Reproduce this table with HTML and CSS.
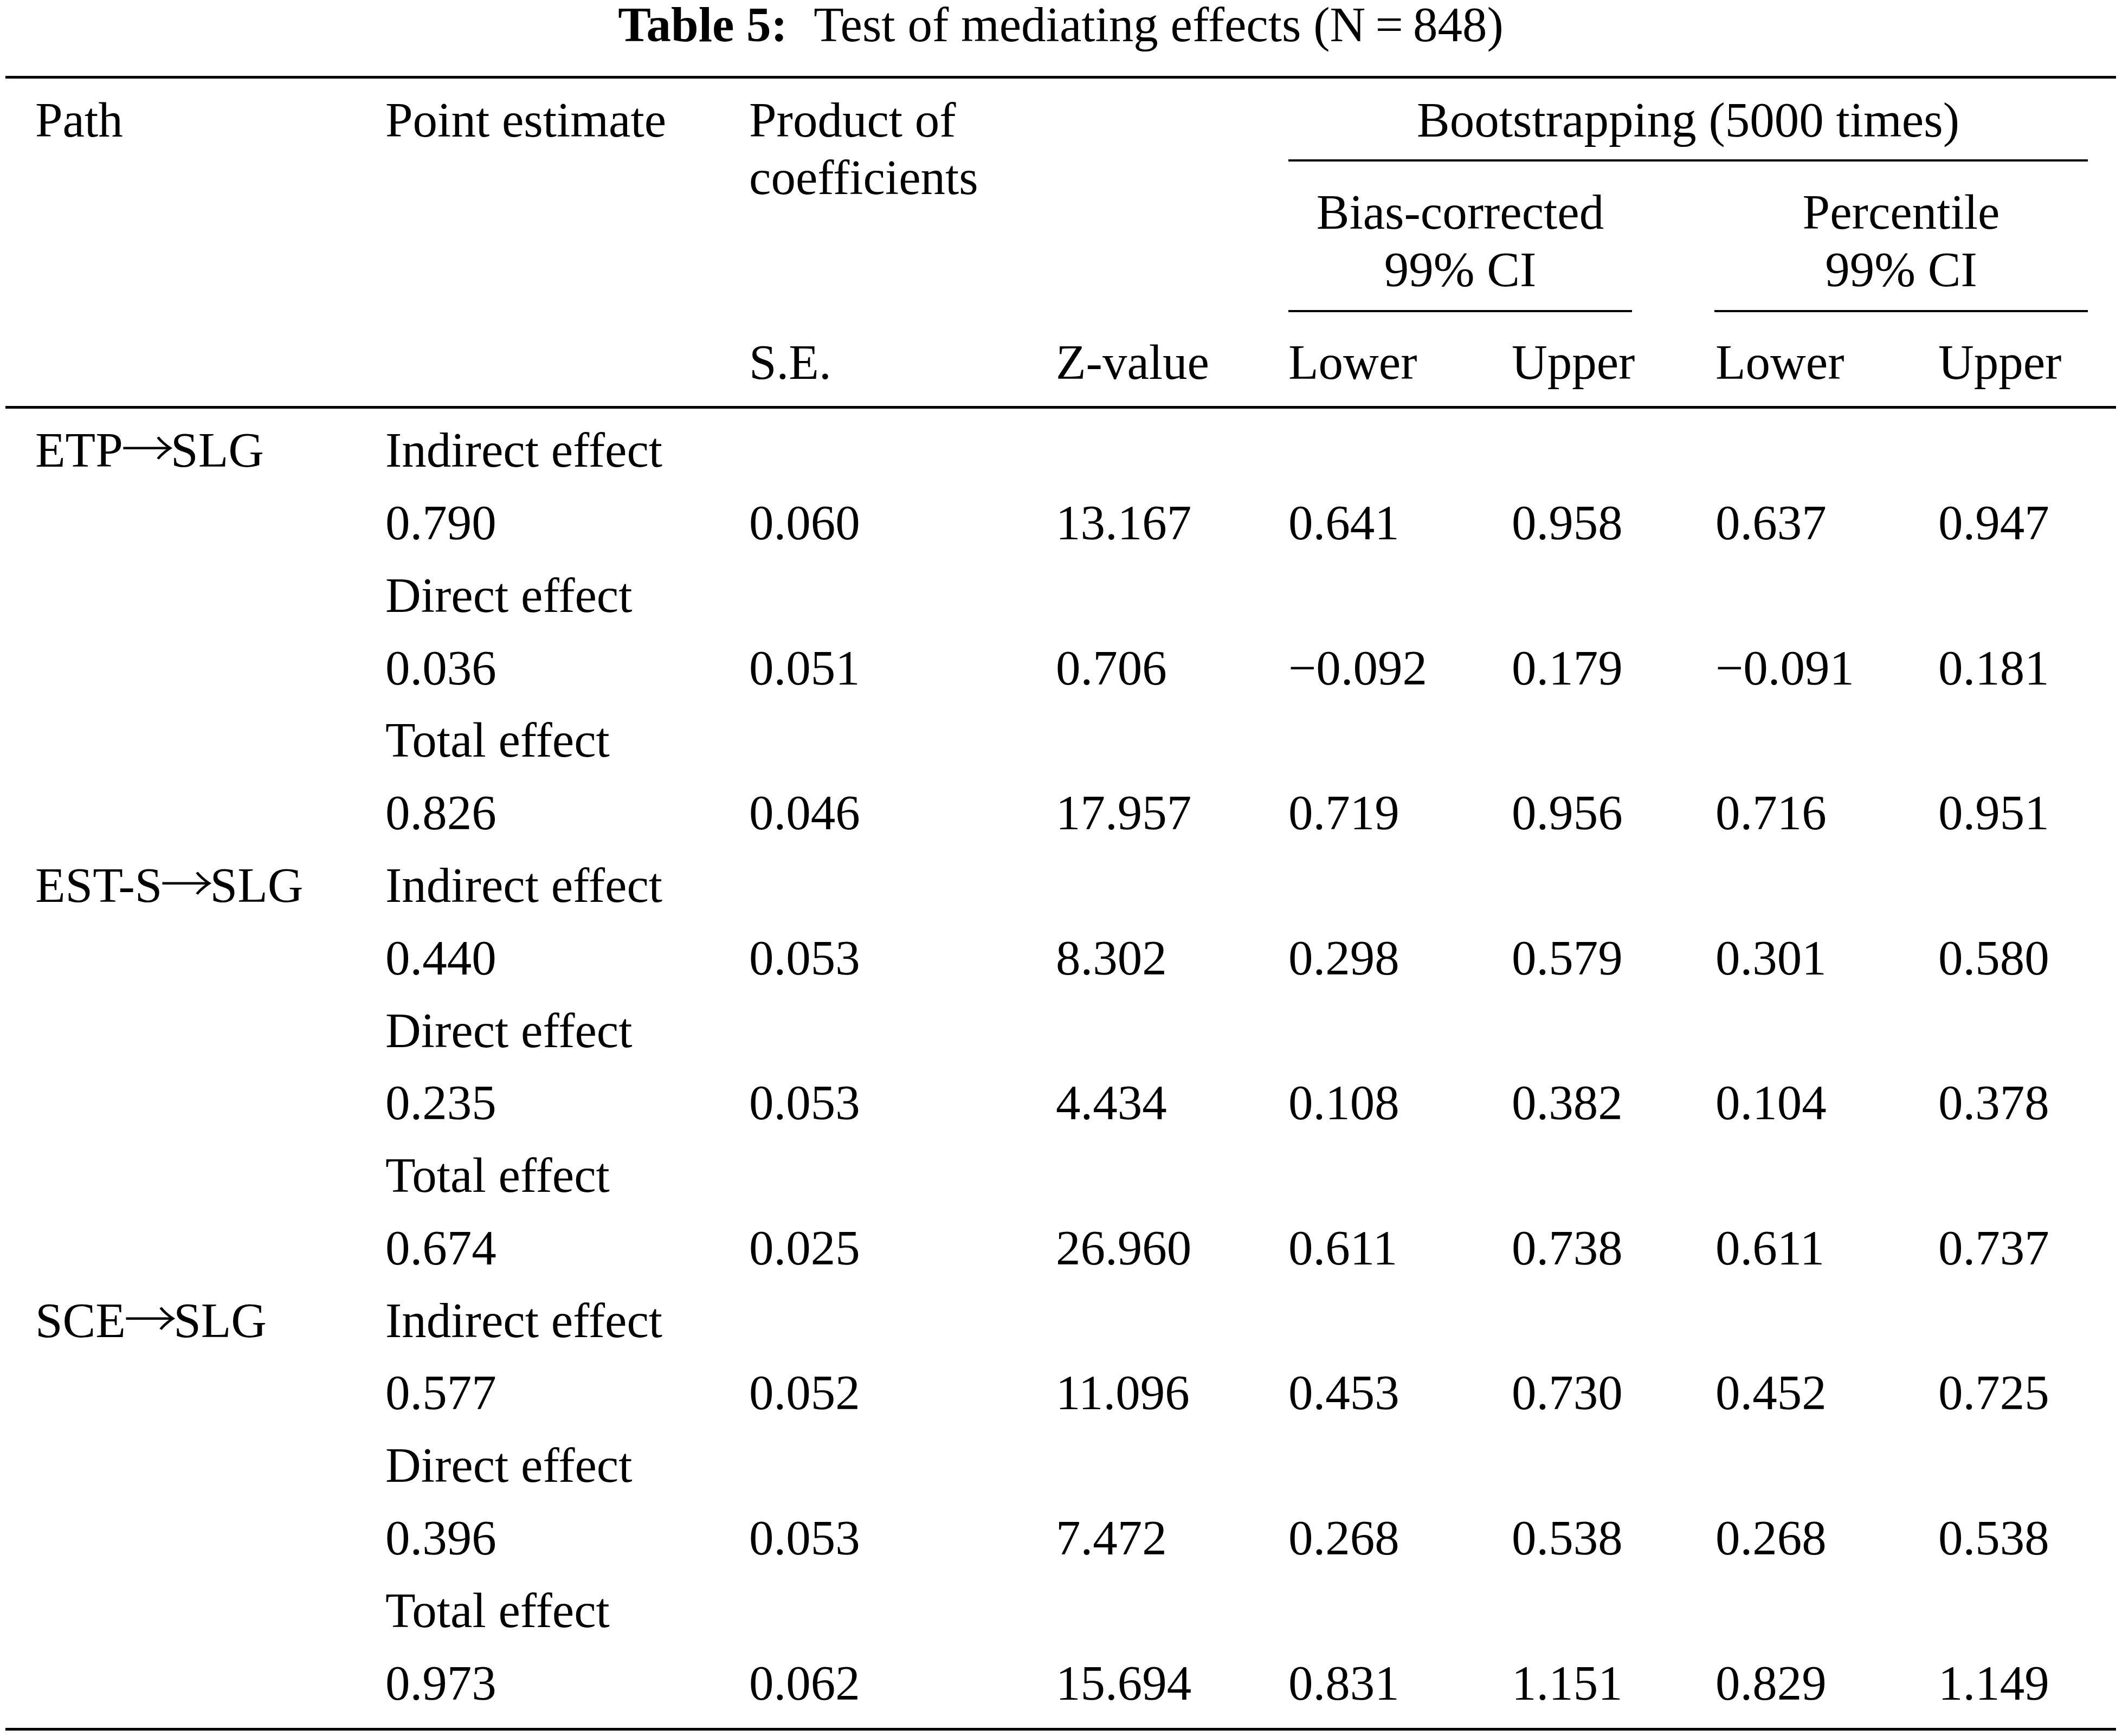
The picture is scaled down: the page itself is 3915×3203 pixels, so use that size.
FILE: index.html
```html
<!DOCTYPE html>
<html lang="en">
<head>
<meta charset="utf-8">
<title>Table 5: Test of mediating effects</title>
<link rel="stylesheet" href="styles.css">
</head>
<body>
<div class="page">
  <div class="caption"><span class="label">Table 5:</span> Test of mediating effects (N&#8201;=&#8201;848)</div>
  <table class="stats">
    <colgroup>
      <col class="c1"><col class="c2"><col class="c3"><col class="c4">
      <col class="c5"><col class="c6"><col class="c7"><col class="c8">
    </colgroup>
    <thead>
      <tr class="ha">
        <th rowspan="3" class="first rule">Path</th>
        <th rowspan="3" class="rule">Point estimate</th>
        <th rowspan="2">Product of<br>coefficients</th>
        <th rowspan="2"></th>
        <th colspan="4" class="group"><div class="span-line boot">Bootstrapping (5000 times)</div></th>
      </tr>
      <tr class="hb">
        <th colspan="2" class="group"><div class="span-line bias">Bias-corrected<br>99% CI</div></th>
        <th colspan="2" class="group"><div class="span-line pct">Percentile<br>99% CI</div></th>
      </tr>
      <tr class="hc">
        <th class="rule">S.E.</th>
        <th class="rule">Z-value</th>
        <th class="rule">Lower</th>
        <th class="rule">Upper</th>
        <th class="rule">Lower</th>
        <th class="rule">Upper</th>
      </tr>
    </thead>
    <tbody>
      <tr><td class="first">ETP<span class="arrow">→</span>SLG</td><td>Indirect effect</td><td></td><td></td><td></td><td></td><td></td><td></td></tr>
      <tr><td class="first"></td><td>0.790</td><td>0.060</td><td>13.167</td><td>0.641</td><td>0.958</td><td>0.637</td><td>0.947</td></tr>
      <tr><td class="first"></td><td>Direct effect</td><td></td><td></td><td></td><td></td><td></td><td></td></tr>
      <tr><td class="first"></td><td>0.036</td><td>0.051</td><td>0.706</td><td>−0.092</td><td>0.179</td><td>−0.091</td><td>0.181</td></tr>
      <tr><td class="first"></td><td>Total effect</td><td></td><td></td><td></td><td></td><td></td><td></td></tr>
      <tr><td class="first"></td><td>0.826</td><td>0.046</td><td>17.957</td><td>0.719</td><td>0.956</td><td>0.716</td><td>0.951</td></tr>
      <tr><td class="first">EST-S<span class="arrow">→</span>SLG</td><td>Indirect effect</td><td></td><td></td><td></td><td></td><td></td><td></td></tr>
      <tr><td class="first"></td><td>0.440</td><td>0.053</td><td>8.302</td><td>0.298</td><td>0.579</td><td>0.301</td><td>0.580</td></tr>
      <tr><td class="first"></td><td>Direct effect</td><td></td><td></td><td></td><td></td><td></td><td></td></tr>
      <tr><td class="first"></td><td>0.235</td><td>0.053</td><td>4.434</td><td>0.108</td><td>0.382</td><td>0.104</td><td>0.378</td></tr>
      <tr><td class="first"></td><td>Total effect</td><td></td><td></td><td></td><td></td><td></td><td></td></tr>
      <tr><td class="first"></td><td>0.674</td><td>0.025</td><td>26.960</td><td>0.611</td><td>0.738</td><td>0.611</td><td>0.737</td></tr>
      <tr><td class="first">SCE<span class="arrow">→</span>SLG</td><td>Indirect effect</td><td></td><td></td><td></td><td></td><td></td><td></td></tr>
      <tr><td class="first"></td><td>0.577</td><td>0.052</td><td>11.096</td><td>0.453</td><td>0.730</td><td>0.452</td><td>0.725</td></tr>
      <tr><td class="first"></td><td>Direct effect</td><td></td><td></td><td></td><td></td><td></td><td></td></tr>
      <tr><td class="first"></td><td>0.396</td><td>0.053</td><td>7.472</td><td>0.268</td><td>0.538</td><td>0.268</td><td>0.538</td></tr>
      <tr><td class="first"></td><td>Total effect</td><td></td><td></td><td></td><td></td><td></td><td></td></tr>
      <tr><td class="first"></td><td>0.973</td><td>0.062</td><td>15.694</td><td>0.831</td><td>1.151</td><td>0.829</td><td>1.149</td></tr>
    </tbody>
  </table>
</div>
</body>
</html>
```
FILE: styles.css
```css
html, body {
  margin: 0;
  padding: 0;
  background: #ffffff;
}

body {
  font-family: "Liberation Serif", "Times New Roman", serif;
  font-size: 91px;
  color: #000000;
}

.page {
  width: 3894px;
  margin-left: 10px;
}

.caption {
  text-align: center;
  line-height: 88px;
  height: 88px;
  padding-top: 2px;
  white-space: nowrap;
}

.caption .label {
  font-weight: bold;
  margin-right: 0.3em;
}

.stats {
  margin-top: 50px;
  width: 3894px;
  table-layout: fixed;
  border-collapse: separate;
  border-spacing: 0;
  border-top: 5px solid #000;
  border-bottom: 5px solid #000;
}

.c1 { width: 701px; }
.c2 { width: 671px; }
.c3 { width: 566px; }
.c4 { width: 429px; }
.c5 { width: 412px; }
.c6 { width: 376px; }
.c7 { width: 411px; }
.c8 { width: 328px; }

.stats th,
.stats td {
  font-weight: normal;
  text-align: left;
  vertical-align: top;
  line-height: 106px;
  padding: 0;
  white-space: nowrap;
}

.stats .first {
  padding-left: 55px;
}

.arrow {
  font-family: "Noto Sans CJK JP", "DejaVu Serif", sans-serif;
  line-height: 0;
  font-weight: 300;
  display: inline-block;
  width: 0.97em;
  text-align: center;
  transform: scaleX(1.08);
}

/* header rows */
.ha th {
  padding-top: 24.3px;
}

.hb th {
  padding-top: 41.3px;
}

.hc th {
  padding-top: 40.3px;
  padding-bottom: 26.7px;
}

.stats th.rule {
  border-bottom: 5px solid #000;
}

.ha th.first.rule,
.ha th.rule {
  padding-bottom: 0;
}

.span-line {
  text-align: center;
  border-bottom: 4px solid #000;
}

.span-line.boot {
  margin-right: 52px;
  padding-bottom: 18.7px;
}

.span-line.bias {
  margin-right: 154px;
  padding-bottom: 20.7px;
}

.span-line.pct {
  margin-left: -2px;
  margin-right: 52px;
  padding-bottom: 20.7px;
}

/* body rows */
.stats tbody td {
  padding-top: 13.9px;
  padding-bottom: 13.9px;
}

.stats tbody tr:first-child td {
  padding-top: 24.3px;
}

.stats tbody tr:last-child td {
  padding-bottom: 29.1px;
}
```
